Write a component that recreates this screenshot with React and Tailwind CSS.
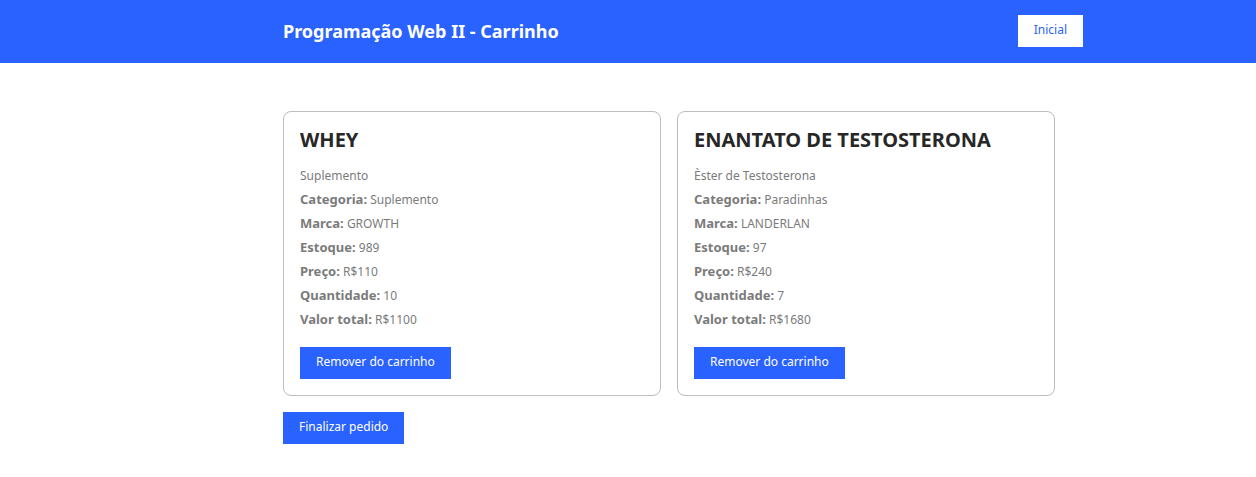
const products = [
  {
    name: "WHEY",
    description: "Suplemento",
    details: [
      ["Categoria", "Suplemento"],
      ["Marca", "GROWTH"],
      ["Estoque", "989"],
      ["Preço", "R$110"],
      ["Quantidade", "10"],
      ["Valor total", "R$1100"],
    ],
  },
  {
    name: "ENANTATO DE TESTOSTERONA",
    description: "Èster de Testosterona",
    details: [
      ["Categoria", "Paradinhas"],
      ["Marca", "LANDERLAN"],
      ["Estoque", "97"],
      ["Preço", "R$240"],
      ["Quantidade", "7"],
      ["Valor total", "R$1680"],
    ],
  },
];

function PrimaryButton({ children }) {
  return (
    <button
      type="button"
      className="block h-8 bg-[#2962ff] px-4 pb-[2px] text-[12px] leading-4 font-[450] whitespace-nowrap text-white"
    >
      {children}
    </button>
  );
}

function ProductCard({ product }) {
  return (
    <article className="rounded-lg border border-[#bdbdbd] p-4">
      <h2 className="text-[20px] leading-6 font-bold text-[#272727]">{product.name}</h2>
      <div className="mt-3 mb-[15px] text-[12px] leading-6 text-[#7b7b7b]">
        <p>{product.description}</p>
        {product.details.map(([label, value]) => (
          <p key={label}>
            <strong className="text-[13px] leading-none font-bold">{label}:</strong> {value}
          </p>
        ))}
      </div>
      <PrimaryButton>Remover do carrinho</PrimaryButton>
    </article>
  );
}

export default function App() {
  return (
    <div className="font-['Noto_Sans',sans-serif]">
      <header className="bg-[#2962ff]">
        <div className="ml-[283px] flex max-w-[800px] items-center justify-between pt-[15px] pb-4">
          <h1 className="text-[18px] leading-8 font-bold text-white">
            Programação Web II - Carrinho
          </h1>
          <a
            href="#inicial"
            className="h-8 bg-white px-4 pt-[7px] text-[12px] leading-4 text-[#2962ff]"
          >
            Inicial
          </a>
        </div>
      </header>
      <main className="ml-[283px] max-w-[772px] pt-12">
        <div className="mb-4 grid grid-cols-2 gap-4">
          {products.map((product) => (
            <ProductCard key={product.name} product={product} />
          ))}
        </div>
        <PrimaryButton>Finalizar pedido</PrimaryButton>
      </main>
    </div>
  );
}
